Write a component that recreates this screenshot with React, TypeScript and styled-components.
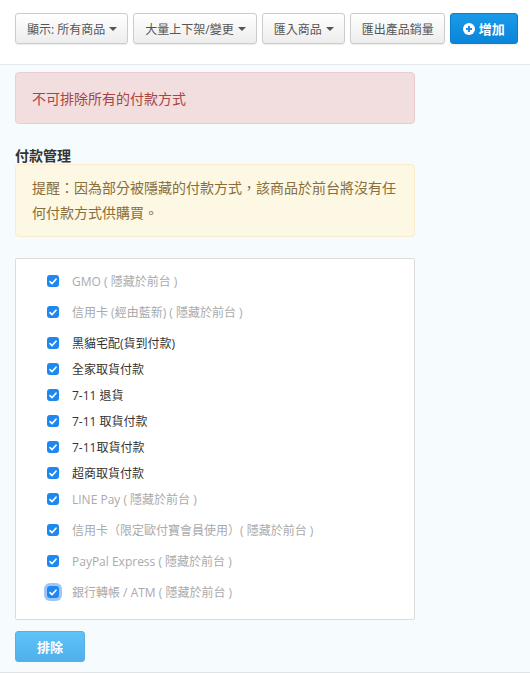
import React from "react";
import styled, { createGlobalStyle } from "styled-components";

const GlobalStyle = createGlobalStyle`
  html, body {
    margin: 0;
    padding: 0;
    background: #f6fcfd;
    font-family: "Open Sans", "Noto Sans CJK TC", sans-serif;
    color: #333;
  }
`;

type Method = { label: string; hidden?: boolean; focused?: boolean };

const methods: Method[] = [
  { label: "GMO ( 隱藏於前台 )", hidden: true },
  { label: "信用卡 (經由藍新) ( 隱藏於前台 )", hidden: true },
  { label: "黑貓宅配(貨到付款)" },
  { label: "全家取貨付款" },
  { label: "7-11 退貨" },
  { label: "7-11 取貨付款" },
  { label: "7-11取貨付款" },
  { label: "超商取貨付款" },
  { label: "LINE Pay ( 隱藏於前台 )", hidden: true },
  { label: "信用卡（限定歐付寶會員使用）( 隱藏於前台 )", hidden: true },
  { label: "PayPal Express ( 隱藏於前台 )", hidden: true },
  { label: "銀行轉帳 / ATM ( 隱藏於前台 )", hidden: true, focused: true },
];

const Caret = () => (
  <svg width="8" height="4" viewBox="0 0 8 4">
    <path d="M0 0h8L4 4z" fill="#555" />
  </svg>
);

const PlusCircle = () => (
  <svg width="12" height="12" viewBox="0 0 12 12">
    <circle cx="6" cy="6" r="6" fill="#fff" />
    <path d="M6 3v6M3 6h6" stroke="#1a8ee0" strokeWidth="2" />
  </svg>
);

const Check = () => (
  <svg width="8" height="7" viewBox="0 0 8 7">
    <path d="M1 3.6l2 2L7 1.2" stroke="#fff" strokeWidth="1.6" fill="none" strokeLinecap="round" strokeLinejoin="round" />
  </svg>
);

const App = () => {
  return (
    <>
      <GlobalStyle />
      <Toolbar>
        <ToolButton>
          顯示: 所有商品
          <Caret />
        </ToolButton>
        <ToolButton>
          大量上下架/變更
          <Caret />
        </ToolButton>
        <ToolButton>
          匯入商品
          <Caret />
        </ToolButton>
        <ToolButton>匯出產品銷量</ToolButton>
        <PrimaryButton>
          <PlusCircle />
          增加
        </PrimaryButton>
      </Toolbar>
      <Content>
        <Alert $kind="danger">不可排除所有的付款方式</Alert>
        <SectionTitle>付款管理</SectionTitle>
        <Alert $kind="warning">
          提醒：因為部分被隱藏的付款方式，該商品於前台將沒有任何付款方式供購買。
        </Alert>
        <MethodBox>
          {methods.map((m, i) => (
            <MethodRow key={i} $hidden={!!m.hidden}>
              <CheckBox $focused={!!m.focused}>
                <Check />
              </CheckBox>
              <span>{m.label}</span>
            </MethodRow>
          ))}
        </MethodBox>
        <ExcludeButton>排除</ExcludeButton>
      </Content>
    </>
  );
};

const Toolbar = styled.div`
  display: flex;
  gap: 5px;
  padding: 13px 14px 20px 15px;
  background: #fff;
  border-bottom: 1px solid #e3e8ea;
`;

const ToolButton = styled.button`
  display: flex;
  align-items: center;
  flex-shrink: 0;
  gap: 4px;
  height: 31px;
  padding: 0 10px 0 11px;
  white-space: nowrap;
  font-family: inherit;
  font-size: 12px;
  color: #555;
  background: linear-gradient(#fff, #ededed);
  border: 1px solid #ccc;
  border-radius: 3px;
  box-shadow: 0 1px 1px rgba(0, 0, 0, 0.08);
`;

const PrimaryButton = styled(ToolButton)`
  padding: 0 12px;
  font-size: 13px;
  font-weight: bold;
  color: #fff;
  background: linear-gradient(#1a9ae8, #0a85d8);
  border-color: #0a7fcf;
`;

const Content = styled.div`
  padding: 7px 15px 10px;
  border-bottom: 1px solid #dfe3e5;
`;

const Alert = styled.div<{ $kind: "danger" | "warning" }>`
  box-sizing: border-box;
  width: 400px;
  padding: ${(p) => (p.$kind === "danger" ? "13px" : "10px")} 14px
    ${(p) => (p.$kind === "danger" ? "12px" : "11px")} 16px;
  font-size: 14px;
  line-height: 25px;
  border-radius: 4px;
  border: 1px solid ${(p) => (p.$kind === "danger" ? "#ebccd1" : "#faebcc")};
  background: ${(p) => (p.$kind === "danger" ? "#f2dede" : "#fcf8e3")};
  color: ${(p) => (p.$kind === "danger" ? "#a94442" : "#8a6d3b")};
`;

const SectionTitle = styled.h4`
  margin: 24px 0 0;
  height: 16px;
  line-height: 16px;
  font-size: 14px;
  font-weight: bold;
  color: #333;
`;

const MethodBox = styled.div`
  box-sizing: border-box;
  width: 400px;
  margin-top: 21px;
  padding: 9px 0;
  background: #fff;
  border: 1px solid #dcdcdc;
  border-radius: 2px;
`;

const MethodRow = styled.label<{ $hidden: boolean }>`
  display: flex;
  align-items: center;
  gap: 13px;
  padding: 0 31px;
  height: 26px;
  margin-bottom: ${(p) => (p.$hidden ? "5px" : "0")};
  font-size: 12px;
  color: ${(p) => (p.$hidden ? "#aaa" : "#333")};
`;

const CheckBox = styled.span<{ $focused: boolean }>`
  display: flex;
  align-items: center;
  justify-content: center;
  width: 12px;
  height: 12px;
  border-radius: 3px;
  background: #1e88f0;
  box-shadow: ${(p) => (p.$focused ? "0 0 0 3px rgba(40, 130, 240, 0.45)" : "none")};
`;

const ExcludeButton = styled.button`
  display: block;
  margin-top: 11px;
  width: 70px;
  height: 31px;
  font-family: inherit;
  font-size: 13px;
  font-weight: bold;
  color: #fff;
  background: linear-gradient(#5fc3f8, #50b0ea);
  border: 1px solid #5ab0e4;
  border-radius: 3px;
`;

export default App;
